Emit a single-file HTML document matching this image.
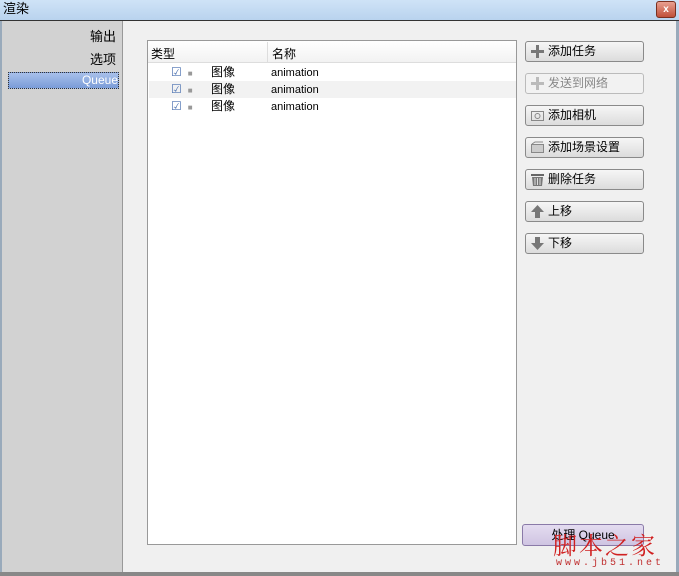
<!DOCTYPE html><html><head><meta charset="utf-8"><style>
body{margin:0;width:679px;height:576px;overflow:hidden;background:#f0f0f0;font-family:"Liberation Sans","Noto Sans CJK SC",sans-serif;font-size:12px;position:relative}
.a{position:absolute}
.btn{position:absolute;left:525px;width:117px;height:19px;border:1px solid #8a8a8a;border-radius:3px;background:linear-gradient(#f6f6f6,#dcdcdc);font-size:12px;line-height:19px;color:#000;box-sizing:content-box}
.btn span{position:absolute;left:22px}
.ic{position:absolute;left:4px;top:2px;width:15px;height:15px}
.row{position:absolute;left:149px;width:367px;height:17px;font-size:12px}
</style></head><body>
<div class="a" style="left:0;top:0;width:679px;height:20px;background:linear-gradient(#cfe3f7,#b9d3ee)"></div>
<div class="a" style="left:3px;top:0;font-size:13px;line-height:18px">渲染</div>
<div class="a" style="left:656px;top:1px;width:18px;height:15px;background:linear-gradient(#e8a090,#c0503a);border:1px solid #7a3020;border-radius:3px;color:#fff;font-size:10px;text-align:center;line-height:15px;font-weight:bold">x</div>
<div class="a" style="left:0;top:20px;width:679px;height:1px;background:#333"></div>
<div class="a" style="left:0;top:21px;width:2px;height:555px;background:#9ab"></div>
<div class="a" style="left:676px;top:21px;width:3px;height:555px;background:#9ab"></div>
<div class="a" style="left:2px;top:21px;width:120px;height:551px;background:#d2d2d2;border-right:1px solid #999"></div>
<div class="a" style="left:0;top:572px;width:679px;height:4px;background:#888"></div>
<div class="a" style="left:80px;top:26px;width:36px;text-align:right;font-size:13px">输出</div>
<div class="a" style="left:80px;top:49px;width:36px;text-align:right;font-size:13px">选项</div>
<div class="a" style="left:8px;top:72px;width:109px;height:15px;background:linear-gradient(#a8c0ea,#7a9cd8);border:1px dotted #333;color:#fff;text-align:right;font-size:12px;line-height:15px">Queue</div>
<div class="a" style="left:147px;top:40px;width:368px;height:503px;background:#fff;border:1px solid #999"></div>
<div class="a" style="left:148px;top:41px;width:368px;height:21px;background:linear-gradient(#fff,#f2f2f2);border-bottom:1px solid #ddd"></div>
<div class="a" style="left:267px;top:42px;width:1px;height:20px;background:#ddd"></div>
<div class="a" style="left:151px;top:45px;font-size:12px">类型</div>
<div class="a" style="left:272px;top:45px;font-size:12px">名称</div>
<div class="row" style="top:64px"></div>
<div class="row" style="top:81px;background:#f2f2f2"></div>
<div class="row" style="top:98px"></div>
<div class="a" style="left:171px;top:64px;line-height:17px;font-size:12px;color:#4a70b0">☑<span style="color:#999;margin-left:6px;font-size:8px">■</span></div>
<div class="a" style="left:171px;top:81px;line-height:17px;font-size:12px;color:#4a70b0">☑<span style="color:#999;margin-left:6px;font-size:8px">■</span></div>
<div class="a" style="left:171px;top:98px;line-height:17px;font-size:12px;color:#4a70b0">☑<span style="color:#999;margin-left:6px;font-size:8px">■</span></div>
<div class="a" style="left:211px;top:64px;line-height:17px;font-size:12px">图像</div>
<div class="a" style="left:211px;top:81px;line-height:17px;font-size:12px">图像</div>
<div class="a" style="left:211px;top:98px;line-height:17px;font-size:12px">图像</div>
<div class="a" style="left:271px;top:65px;line-height:17px;font-size:11px">animation</div>
<div class="a" style="left:271px;top:82px;line-height:17px;font-size:11px">animation</div>
<div class="a" style="left:271px;top:99px;line-height:17px;font-size:11px">animation</div>

<div class="btn" style="top:41px"><svg class="ic" viewBox="0 0 15 15"><path d="M6 1h3v5h5v3H9v5H6V9H1V6h5z" fill="#777"/></svg><span>添加任务</span></div>
<div class="btn" style="top:73px;border-color:#bbb;color:#888;background:#f2f2f2"><svg class="ic" viewBox="0 0 15 15"><path d="M6 1h3v5h5v3H9v5H6V9H1V6h5z" fill="#bbb"/></svg><span>发送到网络</span></div>
<div class="btn" style="top:105px"><svg class="ic" viewBox="0 0 15 15"><rect x="1.5" y="3.5" width="12" height="9" fill="none" stroke="#888"/><circle cx="7.5" cy="8" r="2.5" fill="none" stroke="#888"/></svg><span>添加相机</span></div>
<div class="btn" style="top:137px"><svg class="ic" viewBox="0 0 15 15"><rect x="1.5" y="4.5" width="12" height="8" fill="#ccc" stroke="#888"/><path d="M2 4l3-2h8" stroke="#888" fill="none"/></svg><span>添加场景设置</span></div>
<div class="btn" style="top:169px"><svg class="ic" viewBox="0 0 15 15"><rect x="1" y="2" width="13" height="2" fill="#666"/><path d="M2 5h11l-1 9H3z" fill="#777"/><path d="M5 6v7M7.5 6v7M10 6v7" stroke="#ddd"/></svg><span>删除任务</span></div>
<div class="btn" style="top:201px"><svg class="ic" viewBox="0 0 15 15"><path d="M7.5 1L14 8H10v6H5V8H1z" fill="#777"/></svg><span>上移</span></div>
<div class="btn" style="top:233px"><svg class="ic" viewBox="0 0 15 15"><path d="M7.5 14L14 7H10V1H5v6H1z" fill="#777"/></svg><span>下移</span></div>

<div class="a" style="left:522px;top:524px;width:120px;height:20px;border:1px solid #8a7aa8;border-radius:3px;background:linear-gradient(#e4dcf0,#cfc4e2);font-size:12px;line-height:20px;text-align:center">处理 Queue</div>
<div class="a" style="left:553px;top:526px;font-size:24px;color:#d02020;font-family:'Noto Serif CJK SC',serif;letter-spacing:2px">脚本之家</div>
<div class="a" style="left:556px;top:558px;font-size:10px;color:#c03030;letter-spacing:3px;font-family:'Liberation Mono',monospace">www.jb51.net</div>
</body></html>
